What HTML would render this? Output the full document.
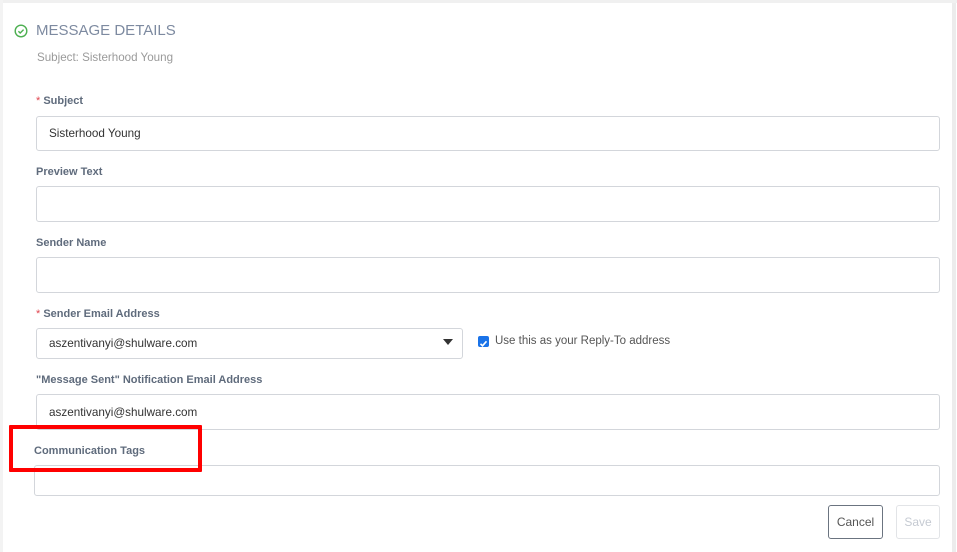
<!DOCTYPE html>
<html><head><style>
body{margin:0;width:957px;height:552px;background:#fff;font-family:"Liberation Sans",sans-serif;position:relative;overflow:hidden}
.a{position:absolute}
.lbl{position:absolute;font-size:11px;font-weight:bold;color:#5f6b7c;left:36px}
.req{color:#e0454f;font-weight:normal}
.inp{position:absolute;left:36px;width:904px;border:1px solid #d3d6db;border-radius:3px;background:#fff;font-size:11.7px;color:#333;box-sizing:border-box;padding-left:12px;display:flex;align-items:center}
</style></head><body>
<div class="a" style="left:0;top:0;width:957px;height:3px;background:#f0f0f0"></div>
<div class="a" style="left:0;top:0;width:3px;height:552px;background:#f3f3f3"></div>
<div class="a" style="left:952px;top:3px;width:4px;height:549px;background:#ececec"></div>
<svg class="a" style="left:14px;top:24px" width="14" height="14" viewBox="0 0 14 14"><circle cx="7" cy="7" r="5.8" fill="none" stroke="#4caf50" stroke-width="1.4"/><path d="M4.4 7.2l1.8 1.8 3.4-3.4" fill="none" stroke="#4caf50" stroke-width="1.4"/></svg>
<div class="a" style="left:36px;top:22px;font-size:15px;color:#7d8aa0">MESSAGE DETAILS</div>
<div class="a" style="left:37px;top:51px;font-size:11.6px;color:#9a9a9a">Subject: Sisterhood Young</div>
<div class="lbl" style="top:95px"><span class="req">*</span> Subject</div>
<div class="inp" style="top:116px;height:35px">Sisterhood Young</div>
<div class="lbl" style="top:166px">Preview Text</div>
<div class="inp" style="top:186px;height:36px"></div>
<div class="lbl" style="top:237px">Sender Name</div>
<div class="inp" style="top:257px;height:36px"></div>
<div class="lbl" style="top:308px"><span class="req">*</span> Sender Email Address</div>
<div class="inp" style="top:328px;height:31px;width:427px">aszentivanyi@shulware.com</div>
<svg class="a" style="left:443px;top:339px" width="10" height="6"><path d="M0 0h10L5 6z" fill="#333"/></svg>
<div class="a" style="left:478px;top:336px;width:11px;height:11px;background:#1a73e8;border-radius:2px"><svg width="11" height="11"><path d="M2.5 5.8l2 2 4-4.5" fill="none" stroke="#fff" stroke-width="1.6"/></svg></div>
<div class="a" style="left:495px;top:335px;font-size:11.5px;color:#555">Use this as your Reply-To address</div>
<div class="lbl" style="top:374px">"Message Sent" Notification Email Address</div>
<div class="inp" style="top:394px;height:36px">aszentivanyi@shulware.com</div>
<div class="lbl" style="top:445px;left:34px">Communication Tags</div>
<div class="inp" style="top:465px;height:31px;left:34px;width:906px"></div>
<div class="a" style="left:9px;top:425px;width:193px;height:47px;border:4px solid #ff0000;box-sizing:border-box;border-radius:1px"></div>
<div class="a" style="left:828px;top:505px;width:55px;height:34px;border:1px solid #6b7480;border-radius:3px;box-sizing:border-box;font-size:12px;color:#555;display:flex;align-items:center;justify-content:center">Cancel</div>
<div class="a" style="left:896px;top:505px;width:44px;height:34px;border:1px solid #e2e4e7;border-radius:3px;box-sizing:border-box;font-size:12px;color:#c5cad2;display:flex;align-items:center;justify-content:center">Save</div>
</body></html>
